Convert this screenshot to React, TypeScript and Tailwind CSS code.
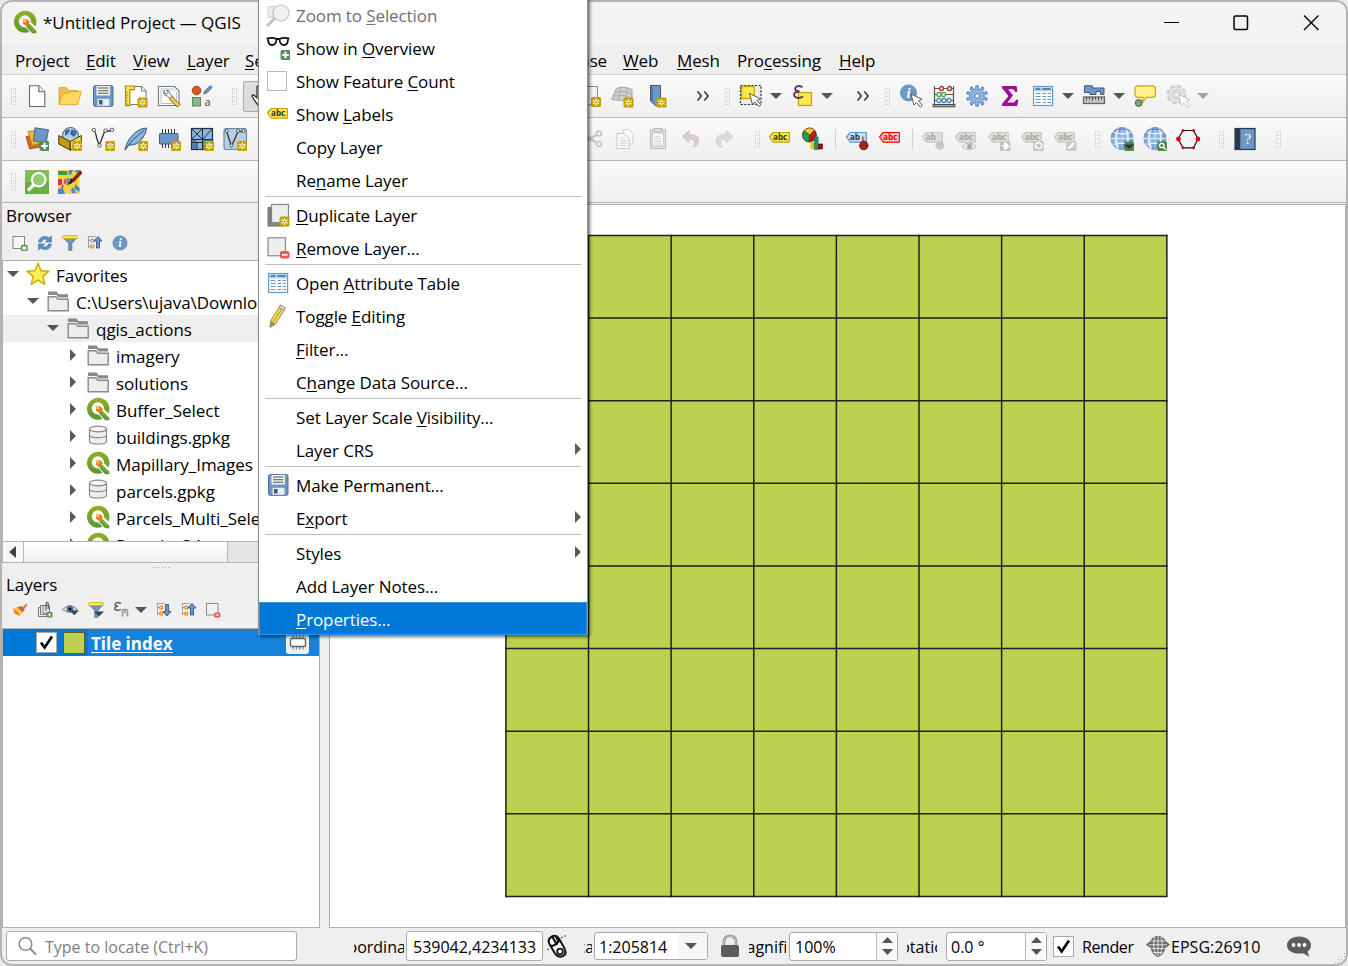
import type { ReactNode } from "react";

type P = { children?: ReactNode; s?: number; v?: string; className?: string };

const Svg = ({ children, s = 24, v, className = "" }: P) => (
  <svg width={s} height={s} viewBox={v ?? `0 0 ${s} ${s}`} fill="none" className={`shrink-0 ${className}`}>
    {children}
  </svg>
);

/* ---------- shared pieces ---------- */

const Star = ({ x = 14, y = 14 }: { x?: number; y?: number }) => (
  <g transform={`translate(${x} ${y})`}>
    <rect width="10" height="10" rx="1.5" fill="#c4a000" />
    <path d="M5 1.5v7M1.8 3.2l6.4 3.6M1.8 6.8l6.4-3.6" stroke="#fffbe0" strokeWidth="1.3" />
    <circle cx="5" cy="5" r="1" fill="#c4a000" />
  </g>
);

const Plus = ({ x = 14, y = 14 }: { x?: number; y?: number }) => (
  <g transform={`translate(${x} ${y})`}>
    <rect width="10" height="10" rx="2" fill="#5a8c5a" />
    <path d="M5 1.8v6.4M1.8 5h6.4" stroke="#fff" strokeWidth="2" />
  </g>
);

const Cursor = ({ x, y, stroke = "#555" }: { x: number; y: number; stroke?: string }) => (
  <path
    transform={`translate(${x} ${y})`}
    d="M0 0l3 11 2.5-2.5 3.8 4.5 2-1.8-3.8-4.2L11 5.3z"
    fill="#fff"
    stroke={stroke}
    strokeWidth="1"
  />
);

const Tri = ({ c = "#555" }: { c?: string }) => (
  <svg width="12" height="6" viewBox="0 0 12 6" className="shrink-0">
    <path d="M0 0h12L6 6z" fill={c} />
  </svg>
);

const Right = () => (
  <svg width="6" height="12" viewBox="0 0 6 12" className="shrink-0">
    <path d="M0 0l6 6-6 6z" fill="#5a5a5a" />
  </svg>
);

const More = () => (
  <Svg s={14}>
    <path d="M1.5 2.5L5.3 7l-3.8 4.5M8.3 2.5L12.1 7l-3.8 4.5" stroke="#3c3c3c" strokeWidth="1.7" />
  </Svg>
);

const Grip = ({ className = "" }: { className?: string }) => (
  <svg width="5" height="17" viewBox="0 0 5 17" className={`shrink-0 ${className}`}>
    {[0, 2, 4, 6, 8, 10, 12, 14, 16].map((y) => (
      <path key={y} d={`M0 ${y}h1v1H0zM4 ${y}h1v1H4z${y % 4 === 0 ? `M2 ${y}h1v1H2z` : ""}`} fill="#c6c6c6" />
    ))}
  </svg>
);

const QLogo = ({ s = 24 }: { s?: number }) => (
  <Svg s={s} v="0 0 24 24">
    <defs>
      <linearGradient id="qg" x1="0" y1="0" x2="0" y2="1">
        <stop offset="0" stopColor="#93b023" />
        <stop offset="1" stopColor="#589632" />
      </linearGradient>
    </defs>
    <path d="M12 .8a11 11 0 1 0 4.6 21l-4-4.3a6.1 6.1 0 1 1 5.3-5.4l4.5 4.4A11 11 0 0 0 12 .8z" fill="url(#qg)" />
    <path d="M15 12.800l8.300 7.900v2.500h-4l-6-6.400z" fill="#589632" />
    <path d="M15 15l6.600 6.600" stroke="#93b023" strokeWidth="1.400" />
    <path d="M10 8.800l4.800.8 2 3-3.600 3.400-3.200-2.500z" fill="#ee7913" />
    <path d="M10 8.800l3 .6.8 3.200-3.500-.6z" fill="#f8c070" />
  </Svg>
);

const Tag = ({ t = "abc", fill = "#fce94f", edge = "#c4a000", ink = "#333", children }: { t?: string; fill?: string; edge?: string; ink?: string; children?: ReactNode }) => (
  <Svg>
    <path d="M1.500 10l3.800-4.500h16v9.600h-16z" fill={fill} stroke={edge} strokeWidth="1.200" strokeLinejoin="round" />
    <text x={t === "ab" ? 4.8 : 5} y="13" fontSize="8.3" fontWeight="700" letterSpacing="-0.1" fill={ink} fontFamily="Open Sans, sans-serif">
      {t}
    </text>
    {children}
  </Svg>
);

const Globe = ({ children }: { children?: ReactNode }) => (
  <Svg>
    <defs>
      <linearGradient id="gl" x1="0" y1="0" x2="1" y2="1">
        <stop offset="0" stopColor="#5a8fd0" />
        <stop offset=".45" stopColor="#8dbcf0" />
        <stop offset="1" stopColor="#3a6fb4" />
      </linearGradient>
    </defs>
    <circle cx="12" cy="11.500" r="11" fill="url(#gl)" stroke="#7d93ab" strokeWidth="1" />
    <path d="M8 1.500Q4 11.500 8 21.500M16 1.500q4 10 0 20" stroke="#eef1f4" strokeWidth="2" />
    <path d="M12 1v21" stroke="#c9d6e6" strokeWidth="1" />
    <path d="M3.500 5.500q8.500 2.500 17 0M3.500 17.500q8.500-2.500 17 0" stroke="#eef1f4" strokeWidth="1.300" />
    <path d="M1 11.500h22" stroke="#dfe5ec" strokeWidth="1.600" />
    <path d="M6 3q6-2.500 12 0" stroke="#667" strokeWidth=".8" />
    {children}
  </Svg>
);

const Table = () => (
  <Svg>
    <rect x="2.600" y="2.500" width="19" height="19" fill="#fff" stroke="#6d97c4" strokeWidth="1.200" />
    <rect x="3.200" y="3.100" width="17.800" height="4.400" fill="#b4d4f0" />
    <path d="M4.500 5h5M11.500 5h8" stroke="#5585bb" strokeWidth="1.800" />
    <path d="M4.500 9.500h5M4.500 12.500h5M4.500 15.500h5M4.500 18.500h5M11.500 9.500h3.500M11.500 12.500h3.500M11.500 15.500h3.500M11.500 18.500h3.500M16.500 9.500h3.500M16.500 12.500h3.500M16.500 15.500h3.500M16.500 18.500h3.500" stroke="#6d97c4" strokeWidth="1.100" />
  </Svg>
);

const Save = () => (
  <Svg>
    <rect x="2.500" y="1.700" width="19.500" height="20.600" rx="1.500" fill="#6d97c4" stroke="#4b6e94" />
    <rect x="5.500" y="2" width="13.500" height="9.500" fill="#f4f4f2" />
    <path d="M7 4h10.500M7 6.700h10.500M7 9.300h10.500" stroke="#555753" strokeWidth="1.100" />
    <rect x="6.500" y="14.800" width="12" height="7" fill="#eeeeec" />
    <rect x="8" y="16" width="3.500" height="4.500" fill="#3c5a80" />
  </Svg>
);

const Info = ({ s = 16 }: { s?: number }) => (
  <Svg s={s} v="0 0 16 16">
    <circle cx="8" cy="8" r="7" fill="#6d97c4" stroke="#5580b0" strokeWidth=".8" />
    <text x="8" y="12" fontSize="11.500" fontStyle="italic" fontWeight="700" fill="#fff" textAnchor="middle" fontFamily="Liberation Serif, serif">i</text>
  </Svg>
);

const Funnel = ({ sub }: { sub?: boolean }) => (
  <Svg s={16}>
    <path d="M1 2.500h14L9.800 8.500v6.800H6.800V8.500z" fill="#6d97c4" stroke="#4b6e94" strokeWidth=".8" />
    <rect x="1" y=".7" width="14" height="3" fill="#fce94f" stroke="#c4a000" strokeWidth=".6" />
    {sub && <path d="M6 9.500h10l-5 5z" fill="#444" />}
  </Svg>
);

const TreeArrow = ({ up }: { up?: boolean }) => (
  <Svg s={16}>
    <path d="M1.500 1.500v11.500M.500 1.500h8M1.500 5.500h3M1.500 11.500h3" stroke="#a0a09c" strokeWidth="1" />
    <rect x="4" y="4.300" width="2.600" height="2.600" fill="#fff" stroke="#f57900" />
    <rect x="4" y="10.300" width="2.600" height="2.600" fill="#fff" stroke="#f57900" />
    <path d={up ? "M11 1.500l4 4.500h-2.500v7H9.500V6H7z" : "M11 14l4-4.500h-2.500v-7H9.500v7H7z"} fill="#6d97c4" stroke="#35557c" strokeWidth=".9" />
  </Svg>
);

const Folder = () => (
  <Svg>
    <path d="M2 2.500h8.500l2 2.800H22v3.200H12.500l-2-2.500H2z" fill="#888a85" />
    <path d="M2.200 7.700h7.600l2.200 2.500h10.200v11.600H2.200z" fill="#eeeeec" stroke="#888a85" strokeWidth="1.400" />
  </Svg>
);

const Db = () => (
  <Svg>
    <path d="M3.500 5v12.500c0 3.300 17 3.300 17 0V5" fill="#eeeeec" stroke="#888a85" strokeWidth="1.200" />
    <ellipse cx="12" cy="5" rx="8.500" ry="2.800" fill="#f6f6f5" stroke="#888a85" strokeWidth="1.200" />
    <path d="M3.500 11.200c0 3.200 17 3.200 17 0" stroke="#888a85" strokeWidth="1.200" />
  </Svg>
);

const Check = () => (
  <span className="flex size-[21px] shrink-0 items-center justify-center border border-[#a8a8a8] bg-white">
    <Svg s={17}>
      <path d="M3 8.500l3.600 5L14 2.500" stroke="#000" strokeWidth="2.600" />
    </Svg>
  </span>
);

/* ---------- toolbar icons ---------- */

const NewDoc = () => (
  <Svg>
    <path d="M4.500 1.700h9.300l6 6v14.800H4.500z" fill="#fff" stroke="#666" strokeWidth="1.100" />
    <path d="M13.800 1.700v6h6" fill="#eee" stroke="#666" strokeWidth="1.100" />
  </Svg>
);
const Open = () => (
  <Svg>
    <path d="M1.200 20.500V3.700h7l2.300 3H20v4" fill="#ecc04a" stroke="#d2a02a" />
    <path d="M1.200 20.700L4.800 9.300h5.500l2-1.500h11l-3.600 12.900z" fill="#fdd663" stroke="#dfae34" />
  </Svg>
);
const Layout = () => (
  <Svg>
    <path d="M5 2.500h13l4 4v14H5z" fill="#fff" stroke="#777" />
    <path d="M17.500 2.500v4.500H22" stroke="#777" />
    <path d="M1.500 2h9v3.700H5.800v16H1.500z" fill="#fce94f" stroke="#b08a00" strokeWidth="1.200" />
    <path d="M2 8h2M2 11h2M2 14h2M2 17h2M2 20h2" stroke="#b08a00" />
    <Star x={13.500} y={13.500} />
  </Svg>
);
const LayoutMgr = () => (
  <Svg>
    <path d="M1.500 2.500h16l4.500 4.500v14.500H1.500z" fill="#fff" stroke="#777" strokeWidth="1.100" />
    <path d="M4 5h12.500l3 3v11.500H4z" stroke="#a9c3e6" />
    <path d="M7 6.500q-1.500 5 3.500 5.500l3 3 2.500-2.500-3-3Q13 6 9.500 6l1.500 2.500L9 10.500z" fill="#eee" stroke="#666" strokeWidth=".9" />
    <path d="M13.500 13.500l8.500 8.500" stroke="#8a6d00" strokeWidth="4.500" />
    <path d="M14 14l7.500 7.500" stroke="#e9d36a" strokeWidth="2.600" />
  </Svg>
);
const Style = () => (
  <Svg>
    <circle cx="6.500" cy="6.500" r="4.300" fill="#d45a26" stroke="#a33f14" />
    <path d="M13.500 9.500l2-3.500 5-4.300 1.500 1.600-4.500 5-3 1.600z" fill="#6d97c4" stroke="#4b6e94" />
    <rect x="2.500" y="13.500" width="8" height="8.500" fill="#8db48e" stroke="#5c8a5e" />
    <text x="14.500" y="21.500" fontSize="11" fill="#444" fontFamily="Open Sans, sans-serif">a</text>
  </Svg>
);
const Hand = () => (
  <Svg>
    <path d="M8 21q-4-5-6-9 1-2 3 0l2 2V3q1.500-2 3 0v7V2q1.500-1.500 3 0v8V3q1.500-1.500 3 0v8V5q2-1 2.500 0v10q0 4-2 6z" fill="#fff" stroke="#333" strokeWidth="1.300" />
  </Svg>
);
const NewMap = () => (
  <Svg>
    <path d="M2 2.500h17.500v18.500H2z" fill="#f2f2f1" stroke="#888" />
    <Star x={13} y={13} />
  </Svg>
);
const New3D = () => (
  <Svg>
    <path d="M5 5q6-4 16 .5v12L.800 15.500z" fill="#cfcfcd" stroke="#a4a4a2" />
    <path d="M4 8.500q6-2.500 17 1M2.500 12q8-2 18 1.500M10 3.500L7.500 16M16 4l-1 13" stroke="#aeaeac" />
    <Star x={12.500} y={13.500} />
  </Svg>
);
const Bookmark = () => (
  <Svg>
    <path d="M6.500 1.500h10V20l-4.500 2-5.500-5z" fill="#6d97c4" stroke="#3c5a80" />
    <path d="M6.500 1.500l1.500 3V18" stroke="#3c5a80" />
    <Star x={12.500} y={13.500} />
  </Svg>
);
const Select = () => (
  <Svg>
    <rect x="1.500" y="1.500" width="20.500" height="19" stroke="#333" strokeWidth="1.200" strokeDasharray="2.200 1.400" fill="#ececea" />
    <rect x="2.700" y="2.500" width="12.500" height="12" fill="#fce94f" stroke="#c4a000" strokeWidth="1.200" />
    <Cursor x={10.500} y={9.500} />
  </Svg>
);
const Expr = () => (
  <Svg>
    <rect x="7.500" y="8.500" width="13" height="13" fill="#fce94f" stroke="#c4a000" strokeWidth="1.200" />
    <path d="M11.500 3.200Q7 .5 4.500 3.500 3 7 8.500 7.500 1.500 8 3.500 12.300q3.500 3.500 8.500 0" stroke="#5c3566" strokeWidth="1.900" />
  </Svg>
);
const Identify = () => (
  <Svg>
    <circle cx="9.500" cy="9" r="8.500" fill="#6d97c4" />
    <text x="9.500" y="14" fontSize="14.500" fontStyle="italic" fontWeight="700" fill="#fff" textAnchor="middle" fontFamily="Liberation Serif, serif">i</text>
    <Cursor x={12} y={10} />
  </Svg>
);
const Abacus = () => (
  <Svg>
    <path d="M2.500 2v20M21.500 2v20M2.500 4.500h19M2.500 10.500h19M2.500 16.500h19" stroke="#555" strokeWidth="1.200" />
    <path d="M1 20.500h22v2.300H1z" fill="#aaa" stroke="#444" />
    <g fill="#fff" strokeWidth="1.300">
      <circle cx="9.500" cy="4.500" r="2" stroke="#cc2222" /><circle cx="17.500" cy="4.500" r="2" stroke="#cc2222" />
      <circle cx="7" cy="10.500" r="2" stroke="#50a850" /><circle cx="11.500" cy="10.500" r="2" stroke="#50a850" />
      <circle cx="7" cy="16.500" r="2" stroke="#4a86b8" /><circle cx="12" cy="16.500" r="2" stroke="#4a86b8" /><circle cx="17" cy="16.500" r="2" stroke="#4a86b8" />
    </g>
  </Svg>
);
const Gear = () => (
  <Svg>
    <g stroke="#4a80bd" strokeWidth="3.600" strokeLinecap="round">
      {[0, 36, 72, 108, 144].map((a) => <path key={a} d="M12 2.700v18.600" transform={`rotate(${a} 12 12)`} />)}
    </g>
    <circle cx="12" cy="12" r="7" fill="#8fb3dc" stroke="#4a80bd" strokeWidth=".8" />
    <g stroke="#8fb3dc" strokeWidth="1.800" strokeLinecap="round">
      {[0, 36, 72, 108, 144].map((a) => <path key={a} d="M12 2.700v18.600" transform={`rotate(${a} 12 12)`} />)}
    </g>
    <circle cx="12" cy="12" r="2.300" fill="#fff" stroke="#4a80bd" />
  </Svg>
);
const Sigma = () => (
  <Svg>
    <path d="M4.500 2.500h13.800l.5 5h-1.500q-.6-2.800-3-2.800H9.500l5 6.800-6 7.500h6.500q2.500 0 3.300-3h1.500l-1 5.500H4.500v-1.500l6.500-8L4.500 4z" fill="#ad00a8" stroke="#7c0078" strokeWidth=".8" />
  </Svg>
);
const Measure = () => (
  <Svg>
    <path d="M2.500 1.800h8V4h11.500v6.500h-3.500V7.500H14v3H8V8.500H2.500z" fill="#6d97c4" stroke="#3c5a80" />
    <rect x="1.500" y="13" width="21" height="6.500" fill="#c4c4c2" stroke="#666" strokeWidth="1.300" />
    <path d="M4.500 13v3.500M7.500 13v2.500M10.500 13v3.500M13.500 13v2.500M16.500 13v3.500M19.500 13v2.500" stroke="#444" />
  </Svg>
);
const Tip = () => (
  <Svg>
    <path d="M5 1.800h14.500q3 0 3 3v5.500q0 3-3 3h-6l-4 5 .5-5H5q-3 0-3-3V4.800q0-3 3-3z" fill="#fcf08a" stroke="#c9a800" strokeWidth="1.200" />
    <circle cx="5.700" cy="19" r="3.400" fill="#73b06f" stroke="#555" />
  </Svg>
);
const Action = () => (
  <Svg>
    <circle cx="10.500" cy="10.500" r="8.500" stroke="#cfcfcd" strokeWidth="3" strokeDasharray="4.400 2.280" strokeLinecap="butt" fill="#f0f0ef" />
    <circle cx="10.500" cy="10.500" r="7.600" stroke="#cfcfcd" fill="#f0f0ef" />
    <circle cx="10.500" cy="10.500" r="5" fill="#dedede" stroke="#c8c8c6" />
    <path d="M8.800 7.500l5 3-5 3z" fill="#fff" stroke="#c4c4c2" strokeWidth=".7" />
    <Cursor x={12.500} y={10.500} stroke="#c4c4c2" />
  </Svg>
);

const DataSource = () => (
  <Svg>
    <path d="M1 9.500l12-1.500 2.500 12-11 2z" fill="#d9652a" stroke="#a04010" strokeWidth=".8" />
    <path d="M3 4.500L14 3l3 13-10 2.500z" fill="#edb92e" stroke="#a87d00" strokeWidth=".8" />
    <path d="M10 .800l13.500 2-2.500 13.500-12.500-2.500z" fill="#6d97c4" stroke="#3c5a80" strokeWidth=".9" />
    <Plus x={14.500} y={14} />
  </Svg>
);
const Geopackage = () => (
  <Svg>
    <circle cx="12.500" cy="8.500" r="8" fill="#b9cde4" stroke="#3c5a80" />
    <path d="M7 4q3-3 5-1l-2 4-3 2zM13 3q4-1 6 3l-3 4-4-3z" fill="#3f6a9e" />
    <path d="M.800 8.500l11.500 6v8.700L.800 17z" fill="#c49b00" stroke="#333" />
    <path d="M12.300 14.500l11-6v8.500l-11 6.200z" fill="#f8dc3a" stroke="#333" />
    <Star x={14.300} y={14} />
  </Svg>
);
const Shape = () => (
  <Svg>
    <path d="M3 3.500q1.500 1 2.500 7l2.800 8 5.200-14 7-1" stroke="#333" strokeWidth="1.300" />
    <g fill="#fff" stroke="#555"><circle cx="2.800" cy="3" r="1.700" /><circle cx="8.500" cy="18.500" r="1.700" /><circle cx="14.500" cy="3.500" r="1.700" /><circle cx="21" cy="2.800" r="1.700" /></g>
    <Star x={14.300} y={14} />
  </Svg>
);
const Feather = () => (
  <Svg>
    <path d="M1 23Q3 12 12 5q5-4 10.500-4 0 5-4.500 11Q13 18.500 5 18q-2 2-4 5z" fill="#8db3dc" stroke="#35557c" />
    <path d="M1 23Q8 12 20 3.500" stroke="#35557c" />
    <Star x={14.300} y={14} />
  </Svg>
);
const Chip = () => (
  <Svg>
    <path d="M5.500 2v19M8.500 2v19M11.500 2v19M14.500 2v19M17.500 2v15" stroke="#333" />
    <rect x="2.500" y="6.500" width="18.500" height="10.500" rx="1" fill="#6d97c4" stroke="#3c5a80" />
    <Star x={14.300} y={14} />
  </Svg>
);
const Mesh = () => (
  <Svg>
    <rect x="1.500" y="1.500" width="21" height="21" fill="#8db3dc" stroke="#222f42" strokeWidth="1.200" />
    <path d="M12.600 13h9.400v9h-9.400zM2 13h4.500v9H2z" fill="#527fb2" />
    <path d="M12.500 1.500v21M1.500 12.500h21M1.500 1.500l11 11M12.500 1.500l-11 11M22.500 1.500l-10 11M1.500 15.500h10.500M7 15.500v7" stroke="#222f42" />
    <Star x={14.300} y={14} />
  </Svg>
);
const Virtual = () => (
  <Svg>
    <rect x="1" y="1.500" width="22.500" height="21" rx="2" fill="#b9cde4" stroke="#6785a8" strokeWidth="1.200" />
    <path d="M3.500 4l5 15.500L15 4.500h5.500" stroke="#333" strokeWidth="1.300" />
    <g fill="#fff" stroke="#555"><circle cx="3.800" cy="4" r="1.500" /><circle cx="8.500" cy="18.500" r="1.500" /><circle cx="15" cy="4" r="1.500" /><circle cx="20.500" cy="4" r="1.500" /></g>
    <Star x={14.300} y={14} />
  </Svg>
);
const Cut = () => (
  <Svg>
    <path d="M2 6l14 9.500M2 17L17 7.500" stroke="#c4c4c2" strokeWidth="2.400" />
    <circle cx="19" cy="17" r="2.500" stroke="#c4c4c2" strokeWidth="1.600" /><circle cx="19" cy="6.500" r="2.500" stroke="#c4c4c2" strokeWidth="1.600" />
  </Svg>
);
const Copy = () => (
  <Svg>
    <path d="M10 2.500h6l4 4V17h-8z" fill="#fafafa" stroke="#cfcfcd" />
    <path d="M4 6.500h7.500L16 11v10.500H4z" fill="#fafafa" stroke="#c4c4c2" />
    <path d="M6.500 11h5M6.500 13.500h7M6.500 16h7M6.500 18.500h7" stroke="#cfcfcd" />
  </Svg>
);
const Paste = () => (
  <Svg>
    <rect x="4.500" y="3" width="15" height="18.500" fill="#e6e6e4" stroke="#c0c0be" strokeWidth="1.200" />
    <rect x="6.500" y="6" width="11" height="13" fill="#fafafa" stroke="#ccc" />
    <rect x="8" y="1.500" width="8" height="3.500" fill="#ddd" stroke="#bbb" />
    <path d="M8.500 9.500h5M8.500 12h7M8.500 14.500h7M8.500 17h7" stroke="#cfcfcd" />
  </Svg>
);
const Undo = ({ flip }: { flip?: boolean }) => (
  <Svg>
    <path transform={flip ? "matrix(-1 0 0 1 24 0)" : undefined} d="M3 9.500l7-6v4q10-.5 10 6.500 0 5-6.500 6 3-3.500 2-5.500-1-2.500-5.500-2.500v3.800z" fill={flip ? "#d9dbd9" : "#d8cfca"} stroke="#cbc8c6" strokeWidth=".7" />
  </Svg>
);
const Diagram = () => (
  <Svg>
    <circle cx="8.500" cy="8" r="7" fill="#cc1111" stroke="#333" strokeWidth=".7" />
    <path d="M8.500 8L3 3.800a7 7 0 0 1 10.500-.8z" fill="#fcc82a" stroke="#333" strokeWidth=".5" />
    <path d="M8.500 8L3 3.800a7 7 0 0 0 5 11.200z" fill="#1fa050" stroke="#333" strokeWidth=".5" />
    <rect x="9.500" y="15.500" width="4" height="6.500" fill="#f9b91c" /><rect x="13.500" y="10" width="3.600" height="12.500" fill="#1fa050" stroke="#066" strokeWidth=".6" /><rect x="17.600" y="17" width="3.800" height="5" fill="#b00" stroke="#500" strokeWidth=".6" />
  </Svg>
);
const PinTag = () => (
  <Tag t="ab" fill="#c8def8" edge="#5b94d8">
    <path d="M18 9.500v6" stroke="#888" strokeWidth="2.200" />
    <circle cx="18.800" cy="18.500" r="4.300" fill="#a32222" stroke="#701212" strokeWidth=".8" />
  </Tag>
);
const Grey = ({ t = "abc", children }: { t?: string; children?: ReactNode }) => (
  <Tag t={t} fill="#e0dfda" edge="#c9c8c3" ink="#a5a4a0">{children}</Tag>
);
const Extent = () => (
  <Svg>
    <path d="M7 3.500h10.500M2 12l5-8.500M22 12l-4.500-8.500M2 12l5 8.800M22 12l-4.500 8.800M7 20.800h10.500" stroke="#111" strokeWidth="1.200" />
    <g fill="#e60012"><circle cx="2.500" cy="12" r="2.400" /><circle cx="22" cy="12" r="2.400" /><circle cx="7" cy="3.500" r="1.500" /><circle cx="17.500" cy="3.500" r="1.500" /><circle cx="7" cy="20.800" r="1.500" /><circle cx="17.500" cy="20.800" r="1.500" /></g>
  </Svg>
);
const Help = () => (
  <Svg>
    <rect x="2" y="1.500" width="20" height="21" fill="#6d97c4" stroke="#2a3a4c" strokeWidth="1.200" />
    <rect x="2" y="1.500" width="5.300" height="21" fill="#2a3a4c" />
    <text x="14.700" y="17" fontSize="15" fill="#fff" textAnchor="middle" fontFamily="Liberation Serif, serif">?</text>
  </Svg>
);
const GreenSearch = () => (
  <Svg>
    <rect width="24" height="24" fill="#7cbf52" /><rect y="12" width="24" height="12" fill="#69ad45" />
    <circle cx="13.700" cy="9.700" r="6.800" stroke="#fff" strokeWidth="2" fill="#93cb70" />
    <path d="M8.500 15L3 20.500" stroke="#fff" strokeWidth="3.200" />
  </Svg>
);
const Osm = () => (
  <Svg>
    <rect width="21.500" height="24" fill="#f9cf48" />
    <path d="M0 1h9v4H0z" fill="#3c9a52" /><path d="M0 9h4v6H0z" fill="#d0305a" />
    <path d="M11 0h4l-2 5-3-1zM9 8l3 1-2 5-2-2zM0 19l5-1 2 6H0zM17 14l4.500 4v4l-5-3zM13 20l2-3 3 6h-4z" fill="#4a86d8" />
    <path d="M7 9v5M5 15l-1 3" stroke="#d0305a" strokeWidth="1.500" />
    <path d="M16 2l3-2h2.500v3z" fill="#4a86d8" />
    <path d="M23.500 1.500L14.500 11" stroke="#7a2c10" strokeWidth="3.600" />
    <path d="M15.500 10.500q-1 4-8 4.500 3.500-1 5.500-7z" fill="#222" />
  </Svg>
);

/* ---------- text helpers ---------- */

const Mn = ({ t }: { t: string }) => {
  const i = t.indexOf("&");
  if (i < 0) return <span>{t}</span>;
  return (
    <span className="whitespace-pre">
      {t.slice(0, i)}
      <span className="underline decoration-1 underline-offset-2">{t[i + 1]}</span>
      {t.slice(i + 2)}
    </span>
  );
};

/* ---------- context menu ---------- */

const ZoomSel = () => (
  <Svg>
    <path d="M2 3.500h9v11H2z" fill="#eceae4" stroke="#d6d4ce" />
    <path d="M9 15l-8 8" stroke="#c0c0be" strokeWidth="3" />
    <circle cx="15" cy="10" r="8" fill="#f0f0ef" stroke="#c4c4c2" strokeWidth="1.200" />
  </Svg>
);
const Glasses = () => (
  <Svg>
    <path d="M.500 2.500q6-1.500 10 .5h3q4-2 10-.5M2 3q0 6 4 6t4.500-5.500M13.500 3.500Q14 9 18 9t4-6" stroke="#111" strokeWidth="1.800" />
    <Plus x={14.500} y={14} />
  </Svg>
);
const Dup = () => (
  <Svg>
    <path d="M2 4.500h2.500v15H18V23H2z" fill="#888a85" stroke="#6b6d69" />
    <rect x="5.500" y="1.500" width="17" height="18" fill="#eeeeec" stroke="#888a85" strokeWidth="1.200" />
    <Star x={13.500} y={13.500} />
  </Svg>
);
const Remove = () => (
  <Svg>
    <rect x="2" y="1.800" width="17.500" height="18" fill="#eeeeec" stroke="#888a85" strokeWidth="1.200" />
    <rect x="14" y="15" width="9.500" height="7.500" rx="2.200" fill="#ef5555" />
    <path d="M16 18.800h5.500" stroke="#fff" strokeWidth="1.800" />
  </Svg>
);
const Pencil = () => (
  <Svg>
    <path d="M14.500 1l5 3-10 16-5.500 3.500.5-6.500z" fill="#ecd75a" stroke="#a08a20" strokeWidth=".9" />
    <path d="M14.500 1l5 3-1.500 2.500-5-3z" fill="#d8d8d6" stroke="#888" strokeWidth=".7" />
    <path d="M4.500 17l5 3-5.500 3.500z" fill="#888a85" /><path d="M16 4.500l-9 14" stroke="#b39b28" />
  </Svg>
);
const Box = () => <span className="-ml-[2px] size-5 border border-[#b9b9b9] bg-white" />;

type Item = { t: string; i?: ReactNode; sub?: boolean; off?: boolean; on?: boolean };
const MENU: Item[][] = [
  [
    { t: "Zoom to &Selection", i: <ZoomSel />, off: true },
    { t: "Show in &Overview", i: <Glasses /> },
    { t: "Show Feature &Count", i: <Box /> },
    { t: "Show &Labels", i: <span className="pt-[3px]"><Tag /></span> },
    { t: "Copy Layer" },
    { t: "Re&name Layer" },
  ],
  [{ t: "&Duplicate Layer", i: <Dup /> }, { t: "&Remove Layer…", i: <Remove /> }],
  [
    { t: "Open &Attribute Table", i: <Table /> },
    { t: "Toggle &Editing", i: <Pencil /> },
    { t: "&Filter…" },
    { t: "C&hange Data Source…" },
  ],
  [{ t: "Set Layer Scale &Visibility…" }, { t: "Layer CRS", sub: true }],
  [{ t: "Make Permanent…", i: <Save /> }, { t: "E&xport", sub: true }],
  [{ t: "Styles", sub: true }, { t: "Add Layer Notes…" }, { t: "&Properties…", on: true }],
];

const ContextMenu = () => (
  <div className="absolute top-[-2px] left-[258px] z-10 w-[330px] border-x border-[#8f8f8f] bg-white tracking-[-0.1px] shadow-[2px_2px_3px_rgba(0,0,0,0.55)]">
    {MENU.map((group, g) => (
      <div key={g}>
        {g > 0 && <div className="mx-[6px] h-[2px] border-t border-[#bdbdbd]" />}
        {group.map((m) => (
          <div
            key={m.t}
            className={`flex h-[33px] items-center pr-[5px] ${m.on ? "border border-[#2d95ea] bg-[#0078d7] pl-[6px] text-white" : m.off ? "pl-[7px] text-[#6f6f6f]" : "pl-[7px]"}`}
          >
            <span className="flex w-6 justify-center">{m.i}</span>
            <span className="grow pt-[3px] pl-[6px]"><Mn t={m.t} /></span>
            {m.sub && <span className="pr-px pb-[2px]"><Right /></span>}
          </div>
        ))}
      </div>
    ))}
  </div>
);

/* ---------- panels ---------- */

const TREE: { t: string; d: number; i: ReactNode; open?: boolean; sel?: boolean }[] = [
  {
    t: "Favorites", d: 0, open: true,
    i: <Svg><path d="M12 1.200l3 7.500 8 .5-6.200 5.200 2 8L12 18.200 5.200 22.400l2-8L1 9.200l8-.5z" fill="#fdf05a" stroke="#d0a800" strokeWidth="1.400" strokeLinejoin="round" /></Svg>,
  },
  { t: "C:\\Users\\ujava\\Downloads", d: 1, open: true, i: <Folder /> },
  { t: "qgis_actions", d: 2, open: true, sel: true, i: <Folder /> },
  { t: "imagery", d: 3, i: <Folder /> },
  { t: "solutions", d: 3, i: <Folder /> },
  { t: "Buffer_Select", d: 3, i: <QLogo /> },
  { t: "buildings.gpkg", d: 3, i: <Db /> },
  { t: "Mapillary_Images", d: 3, i: <QLogo /> },
  { t: "parcels.gpkg", d: 3, i: <Db /> },
  { t: "Parcels_Multi_Select", d: 3, i: <QLogo /> },
  { t: "Parcels_QA", d: 3, i: <QLogo /> },
];
const INDENT = ["pl-[3px]", "pl-[23px]", "pl-[43px]", "pl-[63px]"];

const Browser = () => (
  <section className="flex h-[360px] flex-col">
    <h2 className="pt-px pl-[4px] leading-[24px]">Browser</h2>
    <div className="flex h-[32px] items-center gap-[9px] pb-[2px] pl-[10px]">
      <Svg s={16}><rect x="1" y="1.500" width="11.500" height="12" fill="#f6f6f5" stroke="#888a85" /><rect x="9.500" y="10.500" width="5.500" height="5" rx="1.500" fill="#fff" stroke="#4e8a50" strokeWidth="1.400" /></Svg>
      <Svg s={16}><path d="M1.500 7Q2.500 1.500 8 1.500q2.500 0 4 1.500L14.500 1v6h-6l2-2Q6 2.500 4.500 7zM14.500 9Q13.500 14.500 8 14.500q-2.500 0-4-1.500L1.500 15V9h6l-2 2q4.500 2.500 6-2z" fill="#5a90cc" stroke="#3d6ea8" strokeWidth=".6" /></Svg>
      <Funnel />
      <TreeArrow up />
      <Info />
    </div>
    <div className="mt-px h-[281px] shrink-0 overflow-hidden border-t border-l border-[#b0b0b0] bg-white">
      {TREE.map((r) => (
        <div key={r.t} className={`flex h-[27px] items-center ${INDENT[r.d]} ${r.sel ? "bg-[#efefef]" : ""}`}>
          <span className="flex w-[13px] items-center justify-center pb-[2px]">{r.open ? <Tri /> : <Right />}</span>
          <span className="ml-[7px] pb-px">{r.i}</span>
          <span className="pt-[3px] pl-[6px] whitespace-nowrap">{r.t}</span>
        </div>
      ))}
    </div>
    <div className="flex h-[22px] shrink-0 border border-[#b4b4b4] bg-[#e4e4e4]">
      <span className="flex w-[21px] items-center justify-center border-r border-[#b4b4b4] bg-[#f8f8f8] pr-px">
        <svg width="7" height="12" viewBox="0 0 7 12"><path d="M7 0v12L0 6z" fill="#444" /></svg>
      </span>
      <span className="w-[204px] border-r border-[#b4b4b4] bg-gradient-to-b from-white to-[#f0f0f0]" />
    </div>
  </section>
);

const Layers = () => (
  <section className="flex min-h-0 grow flex-col">
    <div className="flex h-[9px] items-center justify-center">
      <svg width="17" height="1" viewBox="0 0 17 1"><path d="M0 .500h17" stroke="#aaa" strokeDasharray="1 2" /></svg>
    </div>
    <h2 className="pl-[4px] leading-[25px]">Layers</h2>
    <div className="flex h-[31px] items-center pb-[6px] pl-[10px]">
      <Svg s={16}><path d="M8.500 7.500l5.500-6L15.500 3 11 9z" fill="#d88a38" /><path d="M4.500 5.500l5-1.500 3 4-3 3.500-7-1z" fill="#e0564a" /><path d="M1 6.500l4.500-1 5.500 5-3.500 3.500z" fill="#f7d23a" /><path d="M1 6.500l1.500 5L8 14l-2-4z" fill="#e8822e" /></Svg>
      <Svg s={16} className="ml-[9px]"><path d="M3.500 5.500h-2v9h8M6.500 3.500h-3v9h9v-4" stroke="#777" /><path d="M6 3.500h6.500V11H6z" stroke="#777" /><path d="M9 9V2q0-1.500 1.200-1.500T11.200 2v5" stroke="#35557c" strokeWidth="1.100" /><rect x="9.500" y="10" width="6" height="5.500" rx="1" fill="#5a8c5a" /><path d="M12.500 11v3.500M10.800 12.800h3.500" stroke="#fff" /></Svg>
      <Svg s={18} className="ml-[9px]"><path d="M1 8.500Q8 1 15 8.500q-7 6-14 0z" fill="#fff" stroke="#999" strokeWidth="1.200" /><circle cx="8" cy="8" r="3.600" fill="#4a75a8" /><circle cx="8" cy="8" r="1.500" fill="#111" /><path d="M7.500 9.500H17l-4.700 4.700z" fill="#444" /></Svg>
      <span className="ml-[8px]"><Funnel sub /></span>
      <Svg s={17} className="ml-[9px]"><path d="M8 2.500Q3.500.500 2.200 3 1.800 5 5 5.300 .800 5.600 2 8.300q2.500 2 6 0" stroke="#75507b" strokeWidth="1.500" /><path d="M9.500 15.500V9.500q0-1 1-1h3q1 0 1 1v6M12 8.500v4" stroke="#999" strokeWidth="1.600" /></Svg>
      <span className="ml-[5px]"><Tri /></span>
      <span className="ml-[9px]"><TreeArrow /></span>
      <span className="ml-[9px]"><TreeArrow up /></span>
      <Svg s={16} className="ml-[8px]"><rect x="1.500" y="1.500" width="11.500" height="11.500" fill="#f2f2f1" stroke="#888a85" /><rect x="9" y="10.500" width="6.500" height="5" rx="1.500" fill="#ef5555" /><path d="M10.500 13h3.500" stroke="#fff" strokeWidth="1.200" /></Svg>
    </div>
    <div className="min-h-0 grow border border-[#b0b0b0] bg-white">
      <div className="flex h-[27px] items-center bg-[#0078d7] pl-[33px]">
        <Check />
        <span className="ml-[6px] h-[22px] w-[22px] border border-[#55602a] bg-[#bed04f]" />
        <span className="ml-[3px] flex h-full grow items-center bg-[#1583dc] pt-[2px] pl-[3px] font-bold text-white underline decoration-1 underline-offset-2">
          Tile index
        </span>
        <span className="-ml-[33px] mr-[10px] flex size-[23px] items-center justify-center rounded-[3px] bg-[#f0f0f0]">
          <Svg s={18}><path d="M4 1.500v14M7.300 1.500v14M10.700 1.500v14M14 1.500v14" stroke="#777" strokeWidth="1.100" /><rect x="1.500" y="4.500" width="15" height="8" rx="1.500" fill="#fff" stroke="#666" strokeWidth="1.400" /></Svg>
        </span>
      </div>
    </div>
  </section>
);

const LINES = [0, 1, 2, 3, 4, 5, 6, 7, 8];
const MapCanvas = () => (
  <div className="grow border border-[#b0b0b0] bg-white pt-[29px] pl-[174px]">
    <svg width="664" height="664" viewBox="0 0 664 664">
      <rect x="1.800" y="1.500" width="661" height="661" fill="#bed04f" />
      {LINES.map((n) => (
        <path key={n} d={`M${1.9 + n * 82.62} .800v662.400M1.200 ${1.5 + n * 82.62}h662.400`} stroke="#1e211a" strokeWidth="1.500" />
      ))}
    </svg>
  </div>
);

/* ---------- status bar ---------- */

const Clip = ({ w, t }: { w: string; t: string }) => (
  <span className={`flex shrink-0 justify-center overflow-hidden whitespace-nowrap ${w}`}>
    <span className="shrink-0">{t}</span>
  </span>
);

const Spin = () => (
  <span className="flex w-[21px] flex-col items-center justify-center gap-[6px] border-l border-[#b4b4b4] bg-[#fafafa]">
    <svg width="11" height="6" viewBox="0 0 11 6"><path d="M0 6h11L5.500 0z" fill="#555" /></svg>
    <svg width="11" height="6" viewBox="0 0 11 6"><path d="M0 0h11L5.500 6z" fill="#555" /></svg>
  </span>
);

const StatusBar = () => (
  <footer className="flex h-[36px] shrink-0 items-center pl-[4px] text-[16px] tracking-normal">
    <div className="flex h-[30px] w-[291px] items-center rounded-[3px] border border-[#a8a8a8] bg-white pl-[10px] text-[#808080]">
      <Svg s={20}><circle cx="8.500" cy="8" r="6.300" stroke="#8a8a8a" strokeWidth="1.500" /><path d="M13 12.500l6 6" stroke="#8a8a8a" strokeWidth="2" /></Svg>
      <span className="pt-[2px] pl-[8px]">Type to locate (Ctrl+K)</span>
    </div>
    <span className="ml-[57px] pt-[2px]"><Clip w="w-[50px]" t="Coordinate" /></span>
    <div className="ml-[2px] flex h-[30px] w-[137px] items-center rounded-[3px] border border-[#a8a8a8] bg-white pt-px pl-[6px]">539042,4234133</div>
    <Svg s={24} className="ml-[3px]">
      <path d="M6 2.500q4-2 7 2l5 9q3 6-1 8.500-5 2-8-2.500L3.500 10Q1 5 6 2.500z" fill="#fff" stroke="#111" strokeWidth="2" />
      <path d="M6.500 3l4.500 8M10 2.500l3 6M4 11.500q5 1.500 9-5" stroke="#111" strokeWidth="2.200" />
      <circle cx="14" cy="17.500" r="2.800" stroke="#111" strokeWidth="1.800" />
      <path d="M15 4l6-3M1 15l3 1M19 14l2 6-4 3" stroke="#555" strokeWidth="1.200" strokeDasharray="2 1.500" />
    </Svg>
    <span className="ml-[14px] pt-[2px]"><Clip w="w-[8px]" t="Scale" /></span>
    <div className="ml-[2px] flex h-[28px] w-[114px] items-center rounded-[3px] border border-[#a8a8a8] bg-white pl-[4px]">
      <span className="w-[79px] pt-px">1:205814</span>
      <span className="flex h-full grow items-center justify-center bg-[#f6f6f6] pr-[3px]"><Tri /></span>
    </div>
    <Svg s={24} className="ml-[10px]">
      <path d="M6 12V8q0-6 6-6t6 6v4" stroke="#8a8a8a" strokeWidth="2.600" /><path d="M6 12V8q0-6 6-6t6 6v4" stroke="#e4e4e4" strokeWidth=".8" />
      <rect x="3" y="11" width="18" height="12" rx="2" fill="#5c5c5c" />
    </Svg>
    <span className="ml-[7px] pt-[2px]"><Clip w="w-[37px]" t="Magnifier" /></span>
    <div className="ml-[3px] flex h-[29px] w-[109px] rounded-[3px] border border-[#a8a8a8] bg-white">
      <span className="flex grow items-center pt-px pl-[5px]">100%</span><Spin />
    </div>
    <span className="ml-[9px] pt-[2px]"><Clip w="w-[30px]" t="Rotation" /></span>
    <div className="ml-[9px] flex h-[29px] w-[101px] rounded-[3px] border border-[#a8a8a8] bg-white">
      <span className="flex grow items-center pt-px pl-[4px]">0.0 °</span><Spin />
    </div>
    <span className="ml-[6px]"><Check /></span>
    <span className="ml-[8px] w-[64px] pt-[2px] tracking-[-0.4px]">Render</span>
    <Svg s={24}>
      <path d="M0 10.500l4-3q2.500-5.500 8-5.500t8 5.500l4 3q-3 3-4.500 3-1.500 7.500-7.500 9.500-6-2-7.500-9.500Q3 13.500 0 10.500z" fill="#6a6a6a" />
      <path d="M3 10.800h18M5 7h14M5.500 14.500h13M7.500 18.500h9M12 2v20M9 3q-3 9 1 18M15 3q3 9-1 18" stroke="#efefef" strokeWidth=".9" />
    </Svg>
    <span className="ml-px pt-[2px] tracking-[0.05px]">EPSG:26910</span>
    <Svg s={26} className="ml-[26px]">
      <path d="M13 3.500c7 0 12 3.500 12 8.800 0 3-1.500 5-3.500 6.500l2 5-6.500-3.600q-2 .4-4 .4C6 20.600 1 17.500 1 12.300 1 7 6 3.500 13 3.500z" fill="#5c5c5c" />
      <g fill="#fff"><circle cx="7.500" cy="12" r="1.900" /><circle cx="13" cy="12" r="1.900" /><circle cx="18.500" cy="12" r="1.900" /></g>
    </Svg>
    <Svg s={12} className="mt-auto ml-auto">
      <path d="M10.500 1v10M7.500 4v7M4.500 7v4M1.500 10v1" stroke="#b0b0b0" strokeDasharray="1 2" />
    </Svg>
  </footer>
);

/* ---------- window ---------- */

const BAR = "flex shrink-0 items-center border-b border-[#b6b6b6] bg-gradient-to-b from-[#fafafa] to-[#efefef]";

export default function App() {
  return (
    <div className="relative h-[966px] w-[1348px] overflow-hidden bg-[#e9e9e9] font-['Open_Sans','Noto_Sans',sans-serif] text-[17px] leading-[22px] tracking-[-0.02px] text-black">
      <div className="flex h-[966px] w-[1348px] flex-col overflow-hidden rounded-[12px] border-2 border-[#b4b4b4] bg-[#efefef]">
        <header className="flex h-[43px] shrink-0 items-center bg-[#f3f3f3] pb-[3px] pl-[11px]">
          <QLogo />
          <h1 className="ml-[6px] pt-[2px]">*Untitled Project — QGIS</h1>
          <div className="mr-[26px] ml-auto flex items-center gap-[53px]">
            <Svg s={17}><path d="M1 8.500h15" stroke="#000" strokeWidth="1.100" /></Svg>
            <Svg s={17}><rect x="1" y="2" width="13.500" height="13.500" rx="1.500" stroke="#000" strokeWidth="1.500" /></Svg>
            <Svg s={17}><path d="M1 1.500l14.500 14.500M15.500 1.500L1 16" stroke="#000" strokeWidth="1.400" /></Svg>
          </div>
        </header>
        <nav className="flex h-[30px] shrink-0 items-center border-b border-[#d2d2d2] pt-[2px] pl-[13px] tracking-[-0.15px]">
          <span className="w-[71px]"><Mn t="Pro&ject" /></span>
          <span className="w-[47px]"><Mn t="&Edit" /></span>
          <span className="w-[54px]"><Mn t="&View" /></span>
          <span className="w-[58px]"><Mn t="&Layer" /></span>
          <span className="w-[70px]"><Mn t="&Settings" /></span>
          <span className="w-[292px] text-right"><Mn t="&Database" /></span>
          <span className="ml-[16px] w-[54px]"><Mn t="&Web" /></span>
          <span className="w-[60px]"><Mn t="&Mesh" /></span>
          <span className="w-[102px]"><Mn t="Pro&cessing" /></span>
          <span><Mn t="&Help" /></span>
        </nav>

        <div className={`h-[43px] ${BAR}`}>
          <Grip className="ml-[9px]" />
          <div className="ml-[9px] flex gap-[9px]"><NewDoc /><Open /><Save /><Layout /><LayoutMgr /><Style /></div>
          <Grip className="ml-[18px]" />
          <div className="ml-[6px] flex h-[31px] w-[32px] items-center justify-center rounded-[2px] border border-[#a8a8a8] bg-[#dcdcdc] pl-[5px]"><Hand /></div>
          <div className="ml-[303px] flex gap-[9px]"><NewMap /><New3D /><Bookmark /></div>
          <span className="ml-[28px]"><More /></span>
          <Grip className="ml-[15px]" />
          <div className="ml-[9px] flex items-center gap-[7px]"><Select /><Tri /></div>
          <div className="ml-[9px] flex items-center gap-[6px]"><Expr /><Tri /></div>
          <span className="ml-[23px]"><More /></span>
          <Grip className="ml-[15px]" />
          <div className="ml-[9px] flex items-center gap-[9px]"><Identify /><Abacus /><Gear /><Sigma /><Table /></div>
          <span className="ml-[7px]"><Tri /></span>
          <div className="ml-[8px] flex items-center gap-[7px]"><Measure /><Tri /></div>
          <div className="ml-[8px] flex items-center gap-[9px]"><Tip /><Action /></div>
          <span className="ml-[7px]"><Tri c="#a2a2a2" /></span>
        </div>

        <div className={`h-[43px] ${BAR}`}>
          <Grip className="ml-[9px]" />
          <div className="ml-[9px] flex gap-[9px]"><DataSource /><Geopackage /><Shape /><Feather /><Chip /><Mesh /><Virtual /></div>
          <div className="ml-[333px] flex gap-[9px]"><Cut /><Copy /><Paste /><Undo /><Undo flip /></div>
          <Grip className="ml-[19px]" />
          <div className="ml-[8px] flex gap-[9px]"><Tag /><Diagram /></div>
          <span className="ml-[10px] h-[20px] w-px bg-[#cfcfcf]" />
          <div className="ml-[9px] flex gap-[9px]"><PinTag /><Tag fill="#ffc8c8" edge="#f00" ink="#e00000" /></div>
          <span className="ml-[10px] h-[20px] w-px bg-[#cfcfcf]" />
          <div className="ml-[8px] flex gap-[9px]">
            <Grey t="ab"><path d="M18 9.500v6" stroke="#ddd" strokeWidth="2.200" /><circle cx="18.800" cy="18.500" r="4.300" fill="#cfc4c4" /></Grey>
            <Grey><path d="M8 19.500q7-7 14.500 0-7 6-14.500 0z" fill="#f2f2f1" stroke="#b8b8b6" /><circle cx="15.500" cy="19.300" r="2.600" fill="#aaa" /></Grey>
            <Grey><rect x="13" y="14" width="10.500" height="10" rx="1.500" fill="#c2c2c0" /><path d="M15 19h4M18 15.800l3.500 3.200-3.500 3.200z" stroke="#fff" strokeWidth="1.500" fill="#fff" /></Grey>
            <Grey><rect x="13" y="14" width="10.500" height="10" rx="1.500" fill="#c2c2c0" /><path d="M15.500 20a3.200 3.200 0 1 1 3 2M15.500 17.500v3h3" stroke="#fff" strokeWidth="1.500" /></Grey>
            <Grey><rect x="13" y="14" width="10.500" height="10" rx="1.500" fill="#cfcabb" /><path d="M15.500 21.500l5.500-5.500" stroke="#fff" strokeWidth="2.400" /></Grey>
          </div>
          <Grip className="ml-[18px]" />
          <div className="ml-[10px] flex gap-[9px]">
            <Globe><rect x="14.500" y="14.500" width="9.500" height="9.500" rx="1" fill="#4e8a50" /><path d="M13.500 17.500H24.500L19 22z" fill="#333" /></Globe>
            <Globe><rect x="14.500" y="14.500" width="9.500" height="9.500" rx="1" fill="#4e8a50" /><circle cx="18.800" cy="18.500" r="2.200" stroke="#fff" strokeWidth="1.200" /><path d="M20.300 20.300l2.500 2.500" stroke="#fff" strokeWidth="1.400" /></Globe>
            <Extent />
          </div>
          <Grip className="ml-[19px]" />
          <span className="ml-[9px]"><Help /></span>
          <Grip className="ml-[19px]" />
        </div>

        <div className={`h-[42px] ${BAR}`}>
          <Grip className="ml-[9px]" />
          <div className="ml-[9px] flex gap-[9px]"><GreenSearch /><Osm /></div>
        </div>

        <main className="flex min-h-0 grow">
          <div className="flex w-[318px] shrink-0 flex-col"><Browser /><Layers /></div>
          <div className="flex grow pt-px pl-[9px]"><MapCanvas /></div>
        </main>
        <StatusBar />
      </div>
      <ContextMenu />
    </div>
  );
}
